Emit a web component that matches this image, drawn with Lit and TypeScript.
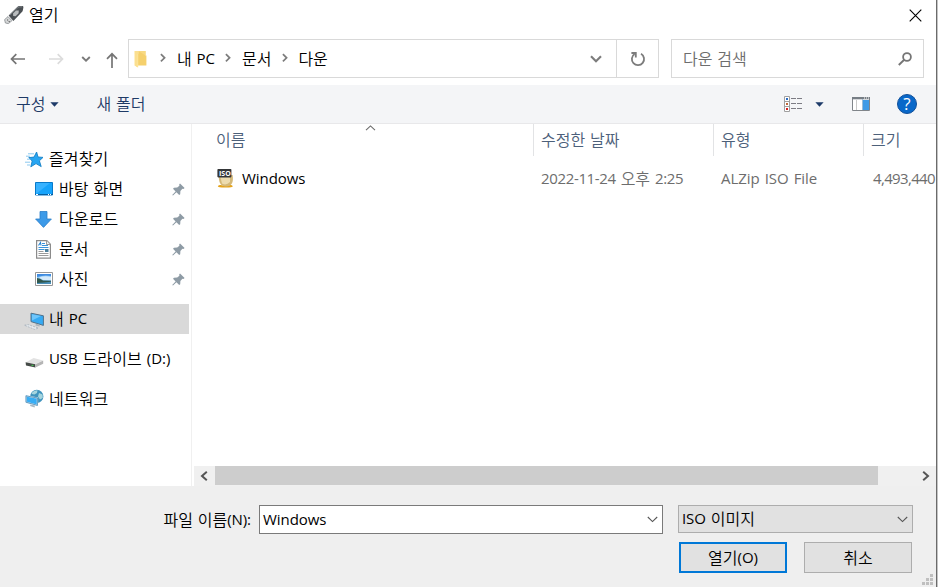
import { LitElement, html, svg, css } from "lit";
import { customElement } from "lit/decorators.js";

const icon = (w: number, h: number, body: unknown) =>
  html`<svg width=${w} height=${h} viewBox="0 0 ${w} ${h}" fill="none">${body}</svg>`;

const usbStick = icon(20, 20, svg`
  <path d="M4.6 10.4 13 2.2Q14 1 15.6 1H18.6Q19.6 1.2 19.4 2.4L18.8 5.4Q18.4 6.6 17.4 7.6L9.4 16Z" fill="#4b5054"/>
  <path d="M5.8 10.2 14 2.4Q15 1.7 18 1.8" stroke="#7c8185" stroke-width="1"/>
  <path d="M9 8.6 12 5.6H14.8L14.6 8.2 11.6 11.2 9.2 11Z" fill="#b9bcbe"/>
  <path d="M.6 14.6 4 11.6 8 15.6 4.4 18.6 1.4 18Z" fill="#d5d7d8" stroke="#888c8f" stroke-width=".8"/>
  <path d="M3 15h1.2M4.6 16.6h1.2" stroke="#555"/>`);
const closeX = icon(13, 13, svg`<path d="M.7.7 12.3 12.3M12.3.7.7 12.3" stroke="#000" stroke-width="1.1"/>`);
const arrowLeft = icon(16, 12, svg`<path d="M15 6H1.5M6.3 1.2 1.5 6 6.3 10.8" stroke="#757575" stroke-width="1.7"/>`);
const arrowRight = icon(16, 12, svg`<path d="M1 6H14.5M9.7 1.2 14.5 6 9.7 10.8" stroke="#dcdcdc" stroke-width="1.7"/>`);
const arrowUp = icon(12, 16, svg`<path d="M6 16V2M1 6.8 6 1.8 11 6.8" stroke="#757575" stroke-width="1.7"/>`);
const chevSmall = icon(10, 6, svg`<path d="M1.2 1 5 4.6 8.8 1" stroke="#7a7a7a" stroke-width="1.9"/>`);
const chevDown = icon(12, 8, svg`<path d="M1 1.2 6 6.2 11 1.2" stroke="#7c7c7c" stroke-width="2.1"/>`);
const crumb = icon(6, 10, svg`<path d="M.9 1.2 4.6 4.8.9 8.4" stroke="#7c7c7c" stroke-width="1.7"/>`);
const folder = icon(13, 18, svg`
  <path d="M4 1H11.5V5.5H12.4V15.6H4Z" fill="#f5d06c"/>
  <path d="M4.4 1H11.5V5.5" fill="#f8d982"/>
  <path d="M.4 1H3L4.2 3.2V17.6L.4 15.4Z" fill="#ffe8a0"/>
  <path d="M1 1H4.8V3L3.6 4.6V17.4L1 15.4Z" fill="#fbdf90"/>`);
const refresh = icon(16, 16, svg`
  <path d="M11 2.8A6.1 6.1 0 1 1 4.6 3" stroke="#7c7c7c" stroke-width="1.8"/>
  <path d="M1.4 2H5.8V6.4" stroke="#7c7c7c" stroke-width="1.8"/>`);
const magnifier = icon(14, 14, svg`
  <circle cx="9" cy="5" r="3.9" stroke="#757575" stroke-width="1.8"/>
  <path d="M6.2 7.8.8 13" stroke="#757575" stroke-width="1.9"/>`);
const caret = icon(9, 5, svg`<path d="M.4.3H8.6L4.5 4.7Z" fill="#1d3a69"/>`);
const listView = icon(19, 16, svg`
  <path d="M.5.5h5v15h-5zM.5 5.5h5M.5 10.5h5" stroke="#a0a0a0" fill="#fff"/>
  <path d="M2 2h2v2H2z" fill="#2b6cc4"/><path d="M2 7h2v2H2z" fill="#c06a3a"/><path d="M2 12h2v2H2z" fill="#d62020"/>
  <path d="M7 2.5h5M13 2.5h5M7 7.5h5M13 7.5h5M7 12.5h5M13 12.5h5" stroke="#7c7c84"/>`);
const previewPane = icon(18, 14, svg`
  <path d="M.5.5h17v13H.5z" stroke="#80858a" fill="#fff"/>
  <path d="M0 0h18v2.3H0z" fill="#777e85"/>
  <path d="M12 1h1M14 1h1M16 1h1" stroke="#fff"/>
  <path d="M4.5 3v10" stroke="#c9c9c9"/><path d="M10.5 2v11" stroke="#9abbd6"/>
  <path d="M11 3h6v10h-6z" fill="#3f9ae6"/>`);
const helpDisc = html`<span class="help">?</span>`;

const star = icon(19, 17, svg`
  <path d="M11.6 1 13 6 18 6.4 14.4 9.8 16.2 15.6 11 12.6 5.8 15.8 7.2 10 3.8 6.6 9 6.1Z" fill="#27a5f2" stroke="#1580c6" stroke-width=".9"/>
  <path d="M3 2.8H9M1 5.2H5M2 8.2H5.4M0 11.2H5M2 14H5" stroke="#8bc9ef" stroke-width="1"/>`);
const desktop = icon(18, 14, svg`
  <path d="M.5.5h17v12.5H.5z" fill="#16a3fb" stroke="#0879c9"/>
  <path d="M1 12V1H15Z" fill="#37b2ff"/>
  <path d="M0 12.5h18" stroke="#075f9f"/><path d="M1 12.5h2M13 12.5h1M15 12.5h1" stroke="#fff"/>`);
const downArrow = icon(17, 17, svg`
  <path d="M5 .5h7V8h4.4L8.5 16.4.6 8H5Z" fill="#3c9ae8" stroke="#2a7dc9" stroke-width=".8"/>`);
const documentIcon = icon(15, 19, svg`
  <path d="M.6.6H10.8L14.4 4.2V18.2H.6Z" fill="#fff" stroke="#8b8b8b" stroke-width="1.2"/>
  <path d="M10.5.8V4.5H14.2" stroke="#999" fill="#eee"/>
  <path d="M2.5 5.5 4.5 2.5 5 5.5" stroke="#2a84d0" stroke-width="1.1"/>
  <path d="M6 3.5h3M6 5.5h6M2.5 7.5h10M2.5 9.5h6" stroke="#3a93da"/>
  <path d="M9 9h3.5v3H9z" fill="#4c7f9c"/>
  <path d="M2.5 11.5h5M2.5 13.5h10M2.5 15.5h10" stroke="#9a9a9a"/>`);
const pictureIcon = icon(18, 14, svg`
  <path d="M.5.5h17v13H.5z" fill="#fff" stroke="#979797"/>
  <path d="M2 2h14v10H2z" fill="#8cc6f3"/>
  <path d="M2 2h14v2Q9 2.6 2 5Z" fill="#3f8be0"/><path d="M4 5.6Q10 3.4 16 5V8H8Z" fill="#d5eafa"/>
  <path d="M2 9.5h14V12H2z" fill="#4a8fb8"/>
  <path d="M2 6Q5 6.4 8 8.4L16 8.8V9.8L9 10.4 2 11Z" fill="#31584e"/>`);
const pcIcon = icon(20, 18, svg`
  <path d="M7 1.2 19.4 3.8V13.4L7 9.6Z" fill="#35aaf4" stroke="#51718a" stroke-width="1"/>
  <path d="M8 2.2 17 4 8 8.6Z" fill="#6fc6fb"/>
  <path d="M12 11.8 11.4 13.6 15.6 14.6 15.6 12.8Z" fill="#a9b3ba"/>
  <path d="M.4 13.2 4 12.6 14.4 16 10.6 17.4Z" fill="#e6eaee" stroke="#a6b0ba" stroke-width=".8" stroke-dasharray="2 1"/>`);
const driveIcon = icon(19, 11, svg`
  <path d="M1 5.2 8.6 1 18 3.4 10.4 7Z" fill="#e2e2e2"/>
  <path d="M.6 5.2 10.4 7.2V10.6L1 8.4Z" fill="#454a47"/>
  <path d="M10.4 7.2 18.2 3.6V6.8L10.4 10.6Z" fill="#b5b5b5"/>
  <path d="M6.5 8.4h2" stroke="#47c053" stroke-width="1.2"/>`);
const networkIcon = icon(19, 19, svg`
  <circle cx="11.8" cy="7.4" r="6.6" fill="#3f93bd"/>
  <path d="M6.6 4Q9 1 12.5 1.2L12 4 9.4 5.6 7 5ZM14 4 17.6 5.4 17.8 9 15 10.6 13 7.5Z" fill="#a6d5de"/>
  <path d="M1 6.8 12.4 9V16.4L1 13.2Z" fill="#37adf5" stroke="#d7ecf9" stroke-width="1.4"/>
  <path d="M1 6.8 12.4 9V16.4L1 13.2Z" stroke="#3577a3" stroke-width=".7"/>
  <path d="M5.4 15.4 10 16.6 9.6 18.4 5 17Z" fill="#a9bac5"/>`);
const pin = icon(13, 13, svg`
  <path d="M8 .4 12.6 5 11.4 6 10.4 5.8 8.4 8 8.2 11.2 7.2 12 4.4 9.2 1 12.6.2 12 3.6 8.4 1 5.8 2 4.8 5.2 4.6 7.4 2.8 7.2 1.4Z" fill="#8e9ba5"/>`);
const isoIcon = icon(19, 20, svg`
  <path d="M1.8 18.2Q3 16.4 6 17.2L9.2 18 12.6 17.2Q16 16.4 16.8 18.2 17 19.6 9.4 19.6 1.6 19.6 1.8 18.2Z" fill="#e5a31a"/>
  <path d="M3 7H16.6Q18.4 18.4 10 18.4 2 18.4 3 7Z" fill="#d3b878"/>
  <path d="M4.4 9H14V14Q10 18 6 15.4Z" fill="#eddcae"/>
  <rect x="1.4" y="1" width="14" height="8.4" rx=".8" fill="#343638"/>`);
const sortUp = icon(11, 6, svg`<path d="M1 5.2 5.5 .9 10 5.2" stroke="#6b6b6b" stroke-width="1.1"/>`);
const thinChev = icon(11, 7, svg`<path d="M.8 1 5.5 5.6 10.2 1" stroke="#555" stroke-width="1.1"/>`);
const scrollLeft = icon(8, 10, svg`<path d="M6.8 .8 2 5 6.8 9.2" stroke="#555" stroke-width="2"/>`);
const scrollRight = icon(8, 10, svg`<path d="M1.2 .8 6 5 1.2 9.2" stroke="#555" stroke-width="2"/>`);
const grip = icon(12, 12, svg`<path d="M8 0h3v3H8zM4 4h3v3H4zM8 4h3v3H8zM0 8h3v3H0zM4 8h3v3H4zM8 8h3v3H8z" fill="#bfbfbf"/>`);

const en = (text: string) => html`<span class="en">${text}</span>`;

@customElement("app-root")
export class AppRoot extends LitElement {
  static styles = css`
    :host {
      display: flex; flex-direction: column; box-sizing: border-box;
      width: 938px; height: 587px; overflow: hidden; position: relative;
      background: #fff; color: #000;
      border-right: 1px solid #c4c4c4;
      font: 350 16px/20px "Noto Sans CJK KR", sans-serif;
      white-space: nowrap; word-spacing: 1.3px;
    }
    :host * { box-sizing: border-box; }
    svg { display: block; flex: none; }
    .edge { position: absolute; right: 0; top: 0; width: 1px; height: 100%; background: #6b6b6b; }
    .t { margin-bottom: 2px; height: 20px; }
    .en { font: 400 15px/18px "Open Sans", sans-serif; letter-spacing: -0.07px; vertical-align: 1px; }
    .solo { margin-bottom: 2px; display: flex; }
    .titlebar { display: flex; align-items: center; height: 31px; flex: none; padding: 0 15px 0 4px; }
    .titlebar svg { margin-bottom: 1px; }
    .titlebar .name { margin: 0 0 3px 5px; flex: 1; }
    .nav { display: flex; height: 39px; margin-top: 8px; flex: none; }
    .arrows { display: flex; align-items: center; width: 128px; padding-left: 10px; }
    .arrows .fwd { margin-left: 22px; }
    .arrows .hist { margin-left: 17px; }
    .arrows .up { margin: 2px 0 0 15px; }
    .address { display: flex; width: 531px; border: 1px solid #d9d9d9; }
    .path { flex: 1; display: flex; align-items: center; padding: 0 14px 0 5px; }
    .path .crumb { margin: 0 10.5px 2px 10.5px; }
    .path .first { margin: 0 11px 2px 13px; }
    .path .drop { margin-left: auto; }
    .reload { width: 42px; border-left: 1px solid #d9d9d9; display: grid; place-items: center; }
    .search { display: flex; align-items: center; justify-content: space-between; width: 253px; margin-left: 12px;
      padding: 0 11px 0 11px; border: 1px solid #d9d9d9; color: #6d6d6d; }
    .tools { display: flex; align-items: center; height: 39px; margin-top: 7px; flex: none; padding: 0 20px 0 16px;
      background: #f4f5f7; border-bottom: 1px solid #e8e8ea; color: #1e3a66; }
    .tools .org { margin-left: 5px; }
    .tools .new { margin: 0 0 2px 37px; flex: 1; }
    .tools .pick { margin: 0 28px 0 12px; }
    .help { display: grid; place-items: center; width: 20px; height: 20px; margin-left: 27px; border-radius: 50%;
      background: #0968c9; border: 1px solid #12509a; color: #fff; font: 500 17px/18px "Open Sans", sans-serif; }
    .main { display: flex; height: 362px; flex: none; }
    .side { width: 192px; border-right: 1px solid #f0f0f0; padding-top: 20px; flex: none; }
    .item { display: flex; align-items: center; height: 30px; width: 189px; }
    .item .ico { display: grid; place-items: center; width: 20px; margin: 0 5px 0 24px; }
    .item .t { letter-spacing: 0.1px; }
    .item.sub .ico { margin: 0 6px 0 34px; width: 19px; }
    .item .pin { margin: 0 4px 0 auto; }
    .item.gap { margin-top: 10px; }
    .item.pc .ico { padding-top: 3px; }
    .item.usb .ico { padding-top: 6px; }
    .item.net { margin-top: 9px; }
    .item.net .ico { padding-top: 1px; }
    .item.net .t { margin-bottom: 1px; }
    .item.on { background: #d9d9d9; }
    .files { flex: 1; display: flex; flex-direction: column; min-width: 0; }
    .cols { display: grid; grid-template-columns: 341px 180px 150px 1fr; position: relative; }
    .cols > div { overflow: hidden; display: flex; align-items: center; }
    .head { height: 32px; color: #4c607a; }
    .head > div { border-left: 1px solid #e2e3e5; padding-left: 7px; }
    .head > div:first-child { border: 0; padding-left: 24px; }
    .head .sort { position: absolute; left: 173px; top: 1px; }
    .row { height: 30px; margin-top: 8px; color: #6d6d6d; }
    .row > div { padding-left: 8px; }
    .row > div:first-child { padding-left: 24px; color: #000; }
    .row > div:last-child { padding-left: 10px; }
    .row .num .en { letter-spacing: -0.35px; }
    .row .size .en { letter-spacing: -0.65px; }
    .iso { position: relative; margin: -3px 7px 0 0; }
    .iso span { position: absolute; left: 3px; top: 1px; color: #fff; font: 700 7px/9px "Open Sans", sans-serif; }
    .hscroll { display: flex; align-items: center; height: 20px; margin: auto 0 0 2px; background: #f0f0f0; }
    .hscroll .btn { width: 21px; height: 19px; display: grid; place-items: center; padding-right: 2px; }
    .hscroll .thumb { width: 663px; height: 19px; margin-right: auto; background: #cdcdcd; align-self: flex-start; }
    .foot { flex: 1; background: #efefef; padding-top: 19px; position: relative; }
    .line { display: flex; align-items: center; justify-content: flex-end; padding-right: 24px; }
    .box { display: flex; align-items: center; justify-content: space-between; height: 29px; padding: 0 4px 0 3px; }
    .name-in { width: 404px; margin: 0 15px 0 8px; background: #fff; border: 1px solid #7a7a7a; }
    .type-in { width: 235px; height: 28px; margin-bottom: 1px; background: #e1e1e1; border: 1px solid #adadad; }
    .buttons { margin-top: 8px; gap: 17px; padding-right: 25px; }
    .button { width: 108px; height: 31px; display: flex; align-items: center; justify-content: center;
      background: #e1e1e1; border: 1px solid #adadad; }
    .button.main-btn { border: 2px solid #0078d7; }
    .grip { position: absolute; right: 3px; bottom: 1px; }
  `;

  render() {
    const subs: [unknown, string][] = [
      [desktop, "바탕 화면"], [downArrow, "다운로드"], [documentIcon, "문서"], [pictureIcon, "사진"],
    ];
    return html`
      <div class="titlebar">${usbStick}<span class="name">열기</span>${closeX}</div>
      <div class="nav">
        <div class="arrows">
          ${arrowLeft}<span class="fwd">${arrowRight}</span><span class="hist">${chevSmall}</span><span class="up">${arrowUp}</span>
        </div>
        <div class="address">
          <div class="path">
            ${folder}<span class="crumb first">${crumb}</span><span class="t">내 ${en("PC")}</span>
            <span class="crumb">${crumb}</span><span class="t">문서</span>
            <span class="crumb">${crumb}</span><span class="t">다운</span>
            <span class="drop">${chevDown}</span>
          </div>
          <div class="reload">${refresh}</div>
        </div>
        <div class="search"><span class="t">다운 검색</span>${magnifier}</div>
      </div>
      <div class="tools">
        <span class="t">구성</span><span class="org">${caret}</span><span class="new">새 폴더</span>
        ${listView}<span class="pick">${caret}</span>${previewPane}${helpDisc}
      </div>
      <div class="main">
        <div class="side">
          <div class="item"><span class="ico">${star}</span><span class="t">즐겨찾기</span></div>
          ${subs.map(([ico, label]) => html`
            <div class="item sub"><span class="ico">${ico}</span><span class="t">${label}</span><span class="pin">${pin}</span></div>`)}
          <div class="item gap pc on"><span class="ico">${pcIcon}</span><span class="t">내 ${en("PC")}</span></div>
          <div class="item gap usb"><span class="ico">${driveIcon}</span><span class="t">${en("USB")} 드라이브 ${en("(D:)")}</span></div>
          <div class="item net"><span class="ico">${networkIcon}</span><span class="t">네트워크</span></div>
        </div>
        <div class="files">
          <div class="cols head">
            <div><span class="t">이름</span></div><div><span class="t">수정한 날짜</span></div>
            <div><span class="t">유형</span></div><div><span class="t">크기</span></div>
            <span class="sort">${sortUp}</span>
          </div>
          <div class="cols row">
            <div><span class="iso">${isoIcon}<span>ISO</span></span><span class="solo">${en("Windows")}</span></div>
            <div><span class="t num">${en("2022-11-24")} 오후 ${en("2:25")}</span></div>
            <div><span class="solo">${en("ALZip ISO File")}</span></div>
            <div><span class="solo size">${en("4,493,440")}</span></div>
          </div>
          <div class="hscroll">
            <span class="btn">${scrollLeft}</span><span class="thumb"></span><span class="btn">${scrollRight}</span>
          </div>
        </div>
      </div>
      <div class="foot">
        <div class="line">
          <span class="t">파일 이름${en("(N):")}</span>
          <div class="box name-in"><span class="solo">${en("Windows")}</span>${thinChev}</div>
          <div class="box type-in"><span class="t">${en("ISO")} 이미지</span>${thinChev}</div>
        </div>
        <div class="line buttons">
          <div class="button main-btn"><span class="t">열기${en("(O)")}</span></div>
          <div class="button"><span class="t">취소</span></div>
        </div>
        <span class="grip">${grip}</span>
      </div>
      <div class="edge"></div>
    `;
  }
}
